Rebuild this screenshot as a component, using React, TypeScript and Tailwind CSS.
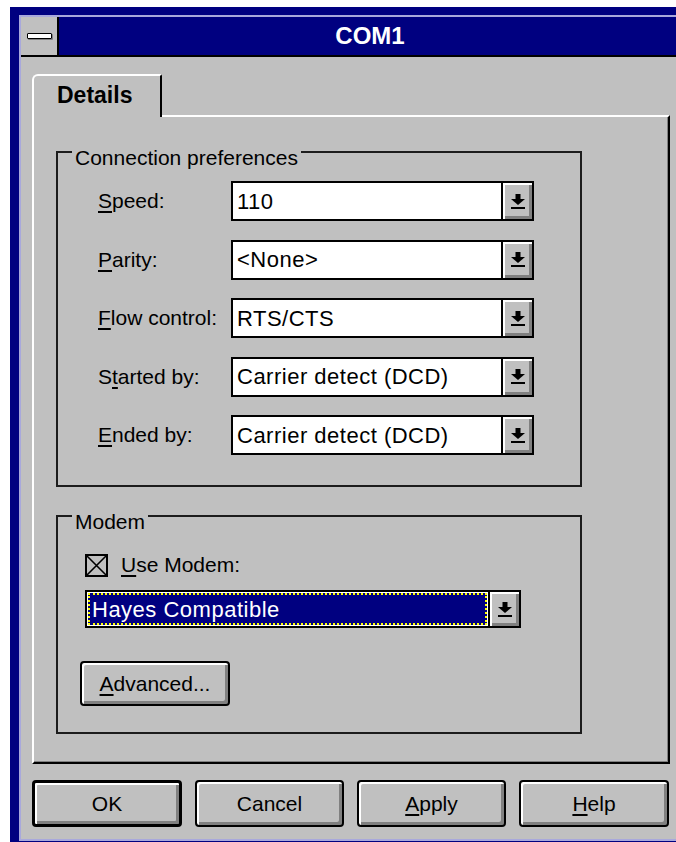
import type { ReactNode } from 'react';

const comboRows = [
  { key: 'S', rest: 'peed:', pre: '', value: '110' },
  { key: 'P', rest: 'arity:', pre: '', value: '<None>' },
  { key: 'F', rest: 'low control:', pre: '', value: 'RTS/CTS' },
  { key: 't', rest: 'arted by:', pre: 'S', value: 'Carrier detect (DCD)' },
  { key: 'E', rest: 'nded by:', pre: '', value: 'Carrier detect (DCD)' },
];

function Mnemonic({ pre = '', k, rest }: { pre?: string; k: string; rest: string }) {
  return (
    <span>
      {pre}
      <span className="underline decoration-[1.5px] underline-offset-[3px]">{k}</span>
      {rest}
    </span>
  );
}

function DropArrow() {
  return (
    <svg width="14" height="15" viewBox="0 0 14 15" className="block">
      <rect x="4.5" y="0" width="5" height="5" fill="#000" />
      <polygon points="0,5 14,5 7,11" fill="#000" />
      <rect x="0" y="13" width="14" height="2" fill="#000" />
    </svg>
  );
}

function DropButton() {
  return (
    <div className="w-[31px] border-l-2 border-black bg-[#c0c0c0] shadow-[inset_2px_2px_0_#fff,inset_-3px_-3px_0_#808080] flex items-center justify-center">
      <DropArrow />
    </div>
  );
}

function Combo({ value, className = '' }: { value: string; className?: string }) {
  return (
    <div className={`flex border-2 border-black bg-white ${className}`}>
      <div className="flex-1 flex items-center pl-[4px] text-[22px] tracking-[0.5px] text-black">{value}</div>
      <DropButton />
    </div>
  );
}

function PushButton({
  children,
  isDefault = false,
  className = '',
}: {
  children: ReactNode;
  isDefault?: boolean;
  className?: string;
}) {
  return (
    <div
      className={`flex items-center justify-center rounded-[4px] bg-[#c0c0c0] border-black ${
        isDefault ? 'border-[3px]' : 'border-2'
      } shadow-[inset_2px_2px_0_#fff,inset_-3px_-3px_0_#808080] text-[21px] text-black ${className}`}
    >
      {children}
    </div>
  );
}

function GroupBox({ title, className = '', children }: { title: string; className?: string; children: ReactNode }) {
  return (
    <div className={`relative border-2 border-[#1c1c1c] ${className}`}>
      <span className="absolute left-[14px] top-[-6px] bg-[#c0c0c0] px-[3px] text-[21px] leading-[21px] text-black">
        {title}
      </span>
      {children}
    </div>
  );
}

export default function App() {
  return (
    <div className="relative w-[676px] h-[842px] overflow-hidden bg-white font-['Liberation_Sans',Arial,sans-serif]">
      {/* window frame */}
      <div className="absolute left-[10px] top-[7px] w-[700px] bg-[#000080] pt-[8px] pl-[9px] pb-[4px]">
        <div className="border-2 border-[#a8a8dc] border-r-0">
          {/* caption */}
          <div className="flex h-[40px] border-b-2 border-black bg-[#000080]">
            <div className="w-[38px] border-r-2 border-black bg-[#c0c0c0] flex items-center justify-center">
              <div className="w-[25px] h-[6px] rounded-[1px] border border-black bg-white shadow-[1px_1px_0_#808080]" />
            </div>
            <div className="w-[622px] flex items-center justify-center text-white font-bold text-[24px]">COM1</div>
          </div>

          {/* client area */}
          <div className="bg-[#c0c0c0] pt-[17px] pl-[11px] pb-[12px]">
            <div className="relative z-10 -mb-[2px] flex h-[43px] w-[130px] items-center rounded-tl-[6px] rounded-tr-[2px] border-l-2 border-t-2 border-r-2 border-l-white border-t-white border-r-black bg-[#c0c0c0] pl-[23px] pb-[2px] text-[23px] font-bold text-black">
              Details
            </div>

            <div className="h-[649px] w-[638px] border-2 border-l-white border-t-white border-r-black border-b-black shadow-[inset_-1px_-1px_0_#808080] pl-[22px] pt-[34px]">
              <GroupBox title="Connection preferences" className="w-[526px] h-[336px] pt-[28px] pl-[40px]">
                <div className="flex flex-col gap-[18.5px]">
                  {comboRows.map((row) => (
                    <div key={row.rest} className="flex items-center h-[40px]">
                      <div className="w-[133px] text-[21px] text-black">
                        <Mnemonic pre={row.pre} k={row.key} rest={row.rest} />
                      </div>
                      <Combo value={row.value} className="w-[303px] h-[40px]" />
                    </div>
                  ))}
                </div>
              </GroupBox>

              <GroupBox title="Modem" className="mt-[28px] w-[526px] h-[219px] pt-[36px] pl-[27px]">
                <div className="flex items-center gap-[13px] h-[24px]">
                  <svg width="23" height="23" viewBox="0 0 23 23" className="block">
                    <rect x="1" y="1" width="21" height="21" fill="none" stroke="#000" strokeWidth="2" />
                    <path d="M2 2 L21 21 M21 2 L2 21" stroke="#000" strokeWidth="1.6" />
                  </svg>
                  <span className="text-[21px] text-black">
                    <Mnemonic k="U" rest="se Modem:" />
                  </span>
                </div>

                <div className="mt-[13px] flex h-[38px] w-[436px] border-2 border-black bg-white">
                  <div className="flex-1 p-[1px]">
                    <div className="flex h-full items-center border-2 border-dotted border-[#ffff00] bg-[#000080] pl-[2px] text-[22px] tracking-[0.5px] text-white">
                      Hayes Compatible
                    </div>
                  </div>
                  <DropButton />
                </div>

                <PushButton className="-ml-[5px] mt-[33px] w-[150px] h-[45px]">
                  <Mnemonic k="A" rest="dvanced..." />
                </PushButton>
              </GroupBox>
            </div>

            <div className="mt-[16px] flex gap-[13px]">
              <PushButton isDefault className="w-[150px] h-[47px]">OK</PushButton>
              <PushButton className="w-[149px] h-[47px]">Cancel</PushButton>
              <PushButton className="w-[149px] h-[47px]">
                <Mnemonic k="A" rest="pply" />
              </PushButton>
              <PushButton className="w-[150px] h-[47px]">
                <Mnemonic k="H" rest="elp" />
              </PushButton>
            </div>
          </div>
        </div>
      </div>
    </div>
  );
}
